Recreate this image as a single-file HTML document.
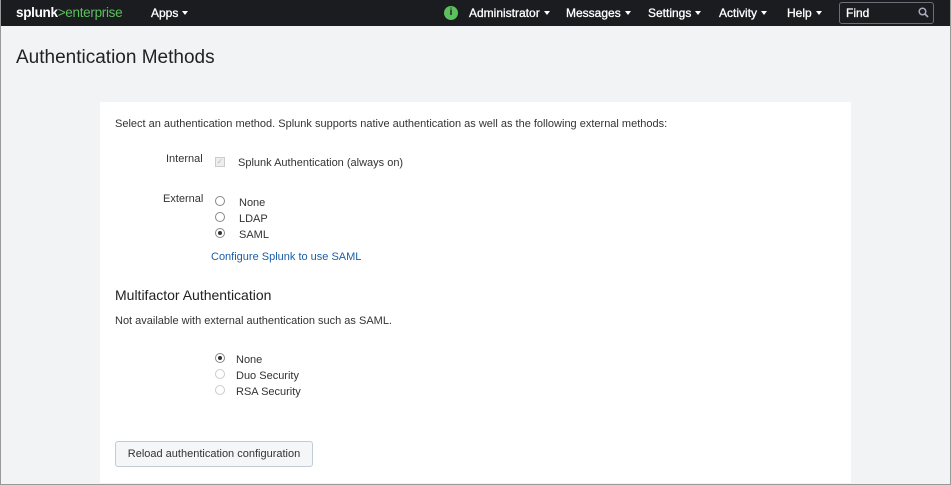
<!DOCTYPE html>
<html><head><meta charset="utf-8"><style>
*{margin:0;padding:0;box-sizing:border-box}
body{width:951px;height:485px;overflow:hidden;background:#f2f3f4;font-family:"Liberation Sans",sans-serif;color:#333;position:relative}
.frame{position:absolute;left:0;top:0;width:951px;height:485px;border:1px solid #999;border-top:none;pointer-events:none}
.nav{position:absolute;left:0;top:0;width:951px;height:26px;background:#1a1c20;color:#fff;font-size:12px;font-weight:normal;-webkit-text-stroke:0.3px #fff}
.nav span{position:absolute;top:6px;white-space:nowrap}
.car{display:inline-block;border-left:3.5px solid transparent;border-right:3.5px solid transparent;border-top:4px solid #fff;vertical-align:middle;margin-left:4px;margin-top:-2px}
.abs{position:absolute;white-space:nowrap}
.card{position:absolute;left:100px;top:102px;width:751px;height:381px;background:#fff}
.t{font-size:11px;color:#333}
.radio{position:absolute;width:10px;height:10px;border-radius:50%;border:1px solid #888;background:#fff}
.radio.on::after{content:"";position:absolute;left:2px;top:2px;width:4px;height:4px;border-radius:50%;background:#333}
.radio.dis{border-color:#ccc}
</style></head><body>
<div class="nav">
<span style="left:16px;top:5px;font-size:13.5px;letter-spacing:-0.3px;font-weight:bold;-webkit-text-stroke:0">splunk<span style="position:static;color:#5cc05c;font-weight:normal">&gt;enterprise</span></span>
<span style="left:151px">Apps<i class="car"></i></span>
<div style="position:absolute;left:444px;top:6px;width:14px;height:14px;border-radius:50%;background:#5cc05c;color:#1a1c20;font-size:10px;font-weight:bold;text-align:center;line-height:14px;-webkit-text-stroke:0">i</div>
<span style="left:469px">Administrator<i class="car"></i></span>
<span style="left:566px">Messages<i class="car"></i></span>
<span style="left:648px">Settings<i class="car"></i></span>
<span style="left:719px">Activity<i class="car"></i></span>
<span style="left:787px">Help<i class="car"></i></span>
<div style="position:absolute;left:839px;top:2px;width:95px;height:22px;border:1px solid #6b7078;border-radius:3px;background:#1a1c20"></div>
<span style="left:846px">Find</span>
<svg style="position:absolute;left:918px;top:7px" width="11" height="11" viewBox="0 0 11 11"><circle cx="4.5" cy="4.5" r="3.3" fill="none" stroke="#aab" stroke-width="1.5"/><path d="M7 7l3 3" stroke="#aab" stroke-width="1.8"/></svg>
</div>
<div class="abs" style="left:16px;top:47px;font-size:19px;color:#222">Authentication Methods</div>
<div class="card"></div>
<div class="abs t" style="left:115px;top:118px">Select an authentication method. Splunk supports native authentication as well as the following external methods:</div>
<div class="abs t" style="left:166px;top:153px">Internal</div>
<div class="abs" style="left:215px;top:157px;width:10px;height:10px;border:1px solid #ccc;background:#eee;font-size:8px;color:#bbb;line-height:8px;text-align:center">✓</div>
<div class="abs t" style="left:238px;top:157px">Splunk Authentication (always on)</div>
<div class="abs t" style="left:163px;top:193px">External</div>
<div class="radio" style="left:215px;top:196px"></div><div class="abs t" style="left:239px;top:197px">None</div>
<div class="radio" style="left:215px;top:212px"></div><div class="abs t" style="left:239px;top:213px">LDAP</div>
<div class="radio on" style="left:215px;top:228px"></div><div class="abs t" style="left:239px;top:229px">SAML</div>
<div class="abs t" style="left:211px;top:251px;color:#1a5ea8">Configure Splunk to use SAML</div>
<div class="abs" style="left:115px;top:287px;font-size:14px;color:#222">Multifactor Authentication</div>
<div class="abs t" style="left:115px;top:315px">Not available with external authentication such as SAML.</div>
<div class="radio on" style="left:215px;top:353px"></div><div class="abs t" style="left:236px;top:354px">None</div>
<div class="radio dis" style="left:215px;top:369px"></div><div class="abs t" style="left:236px;top:370px">Duo Security</div>
<div class="radio dis" style="left:215px;top:385px"></div><div class="abs t" style="left:236px;top:386px">RSA Security</div>
<div class="abs t" style="left:115px;top:441px;width:198px;height:26px;border:1px solid #c3cbd4;border-radius:3px;background:#f4f6f8;text-align:center;line-height:24px;color:#333">Reload authentication configuration</div>
<div class="frame"></div>
</body></html>
